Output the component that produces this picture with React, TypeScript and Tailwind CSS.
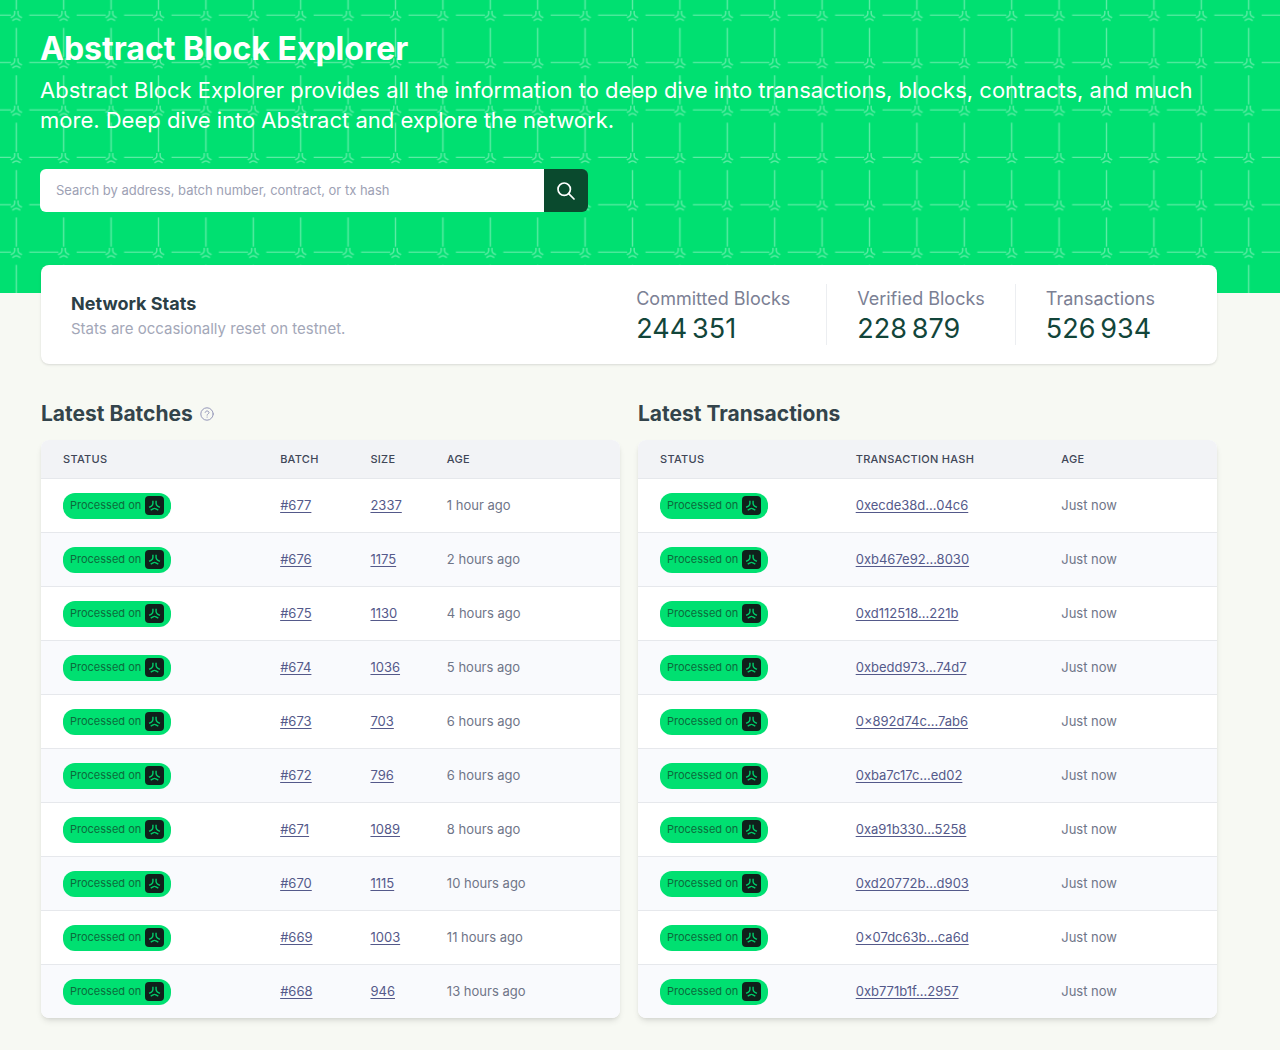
import React from "react";

const batches = [
  { id: "#677", size: "2337", age: "1 hour ago" },
  { id: "#676", size: "1175", age: "2 hours ago" },
  { id: "#675", size: "1130", age: "4 hours ago" },
  { id: "#674", size: "1036", age: "5 hours ago" },
  { id: "#673", size: "703", age: "6 hours ago" },
  { id: "#672", size: "796", age: "6 hours ago" },
  { id: "#671", size: "1089", age: "8 hours ago" },
  { id: "#670", size: "1115", age: "10 hours ago" },
  { id: "#669", size: "1003", age: "11 hours ago" },
  { id: "#668", size: "946", age: "13 hours ago" },
];

const transactions = [
  "0xecde38d...04c6",
  "0xb467e92...8030",
  "0xd112518...221b",
  "0xbedd973...74d7",
  "0×892d74c...7ab6",
  "0xba7c17c...ed02",
  "0xa91b330...5258",
  "0xd20772b...d903",
  "0×07dc63b...ca6d",
  "0xb771b1f...2957",
];

const stats = [
  { label: "Committed Blocks", value: "244\u2009351" },
  { label: "Verified Blocks", value: "228\u2009879" },
  { label: "Transactions", value: "526\u2009934" },
];

const ARM = "M-2.1 -7V-3.4Q-2.1 -1.2 -4 -0.1L-7.1 1.7";

function Star() {
  return (
    <>
      <path d={ARM} />
      <path d={ARM} transform="rotate(120)" />
      <path d={ARM} transform="rotate(240)" />
    </>
  );
}

function HeroPattern() {
  return (
    <svg className="absolute inset-0 h-full w-full" aria-hidden="true">
      <defs>
        <pattern id="grid" width="47.4" height="47.4" patternUnits="userSpaceOnUse">
          <g fill="none" stroke="#fff" strokeOpacity="0.36">
            <g transform="translate(16.3 16.4) scale(0.8)" strokeWidth="1.8">
              <Star />
            </g>
            <path strokeWidth="1.4" d="M29.3 15.2H47.4M0 15.2H11M16.3 28V47.4M16.3 0V9.6" />
          </g>
        </pattern>
      </defs>
      <rect width="100%" height="100%" fill="url(#grid)" />
    </svg>
  );
}

function StatusBadge() {
  return (
    <span className="flex h-[26px] w-[108px] items-center justify-between rounded-[12px] bg-[#00e071] pr-[7px] pl-[7px] text-[11px] whitespace-nowrap text-[#0c6b3c]">
      Processed on
      <svg className="size-[19px] shrink-0" viewBox="-9.5 -9.5 19 19" aria-hidden="true">
        <rect x="-9.5" y="-9.5" width="19" height="19" rx="4" fill="#10201b" />
        <g transform="translate(0 0.6) scale(0.76)" fill="none" stroke="#00c968" strokeWidth="1.9">
          <Star />
        </g>
      </svg>
    </span>
  );
}

const th = "h-[38px] pl-[22px] text-left text-[11px] font-medium tracking-wide text-[#3f4657] uppercase";
const td = "h-[54px] border-t border-[#e6e8ec] pl-[22px]";
const link = "text-[#54598a] underline underline-offset-2";
const table =
  "w-full table-fixed border-separate border-spacing-0 overflow-hidden rounded-lg bg-white text-[13px] whitespace-nowrap text-[#6f7588] shadow-md";
const heading = "flex h-8 items-center gap-[7px] text-[21px] font-bold text-[#33444b]";

export default function App() {
  return (
    <div className="min-h-screen bg-[#f7f9f3] pb-8 font-['Inter',sans-serif]">
      <header className="relative bg-[#00e071] pr-[63px] pb-[81px] pl-10">
        <HeroPattern />
        <div className="relative pt-7">
          <h1 className="text-[32px] leading-[42px] font-bold text-white">Abstract Block Explorer</h1>
          <p className="mt-[5px] text-[22px] leading-[30px] text-white">
            Abstract Block Explorer provides all the information to deep dive into transactions, blocks, contracts, and
            much more. Deep dive into Abstract and explore the network.
          </p>
          <form className="mt-[34px] flex h-[43px] max-w-[548px] overflow-hidden rounded-md" onSubmit={(e) => e.preventDefault()}>
            <input
              type="search"
              aria-label="Search"
              placeholder="Search by address, batch number, contract, or tx hash"
              className="min-w-0 flex-1 bg-white px-4 text-[13px] text-[#33444b] outline-none placeholder:text-[#9da1b4]"
            />
            <button type="submit" aria-label="Search" className="grid w-11 place-items-center bg-[#0a4a2e] text-white">
              <svg className="size-[18px]" viewBox="0 0 18 18" fill="none" stroke="currentColor" strokeWidth="1.7" strokeLinecap="round">
                <circle cx="7.2" cy="7.2" r="6.2" />
                <path d="M11.7 11.7L17 17" />
              </svg>
            </button>
          </form>
        </div>
      </header>

      <main className="relative -mt-7 pr-[63px] pl-[41px]">
        <section className="flex items-center justify-between rounded-lg bg-white py-[19px] pr-8 pl-[30px] shadow">
          <div className="pt-1">
            <h2 className="text-[18px] leading-6 font-bold text-[#2b3f46]">Network Stats</h2>
            <p className="text-[15px] leading-[26px] text-[#a3a7b8]">Stats are occasionally reset on testnet.</p>
          </div>
          <dl className="flex">
            {stats.map((s) => (
              <div key={s.label} className="border-l border-[#eceef1] px-[30px] pt-[2px] first:min-w-[220px] first:border-l-0">
                <dt className="text-[18px] leading-[25px] text-[#7b8094]">{s.label}</dt>
                <dd className="pt-[2px] text-[27px] leading-8 text-[#12453a]">{s.value}</dd>
              </div>
            ))}
          </dl>
        </section>

        <div className="mt-[34px] grid grid-cols-2 gap-[18px]">
          <section>
            <h2 className={heading}>
              Latest Batches
              <svg className="size-[14px]" viewBox="0 0 14 14" fill="none" stroke="#9497b8" strokeLinecap="round" aria-hidden="true">
                <circle cx="7" cy="7" r="6.2" />
                <path d="M5.2 5.4C5.5 4.3 6.3 4 7.1 4C8.2 4 9 4.7 9 5.6C9 6.8 7.1 6.8 7.1 8.2M7.1 10V10.2" />
              </svg>
            </h2>
            <div className="mt-[10px]">
              <table className={table}>
                <thead className="bg-[#f2f3f6]">
                  <tr>
                    <th className={`${th} w-[37.5%]`}>Status</th>
                    <th className={`${th} w-[15.6%]`}>Batch</th>
                    <th className={`${th} w-[13.2%]`}>Size</th>
                    <th className={th}>Age</th>
                  </tr>
                </thead>
                <tbody>
                  {batches.map((b) => (
                    <tr key={b.id} className="even:bg-[#f9fafd]">
                      <td className={td}><StatusBadge /></td>
                      <td className={td}><a href="#batch" className={link}>{b.id}</a></td>
                      <td className={td}><a href="#size" className={link}>{b.size}</a></td>
                      <td className={td}>{b.age}</td>
                    </tr>
                  ))}
                </tbody>
              </table>
            </div>
          </section>

          <section>
            <h2 className={heading}>Latest Transactions</h2>
            <div className="mt-[10px]">
              <table className={table}>
                <thead className="bg-[#f2f3f6]">
                  <tr>
                    <th className={`${th} w-[33.8%]`}>Status</th>
                    <th className={`${th} w-[35.5%]`}>Transaction Hash</th>
                    <th className={th}>Age</th>
                  </tr>
                </thead>
                <tbody>
                  {transactions.map((hash) => (
                    <tr key={hash} className="even:bg-[#f9fafd]">
                      <td className={td}><StatusBadge /></td>
                      <td className={td}><a href="#tx" className={link}>{hash}</a></td>
                      <td className={td}>Just now</td>
                    </tr>
                  ))}
                </tbody>
              </table>
            </div>
          </section>
        </div>
      </main>
    </div>
  );
}
